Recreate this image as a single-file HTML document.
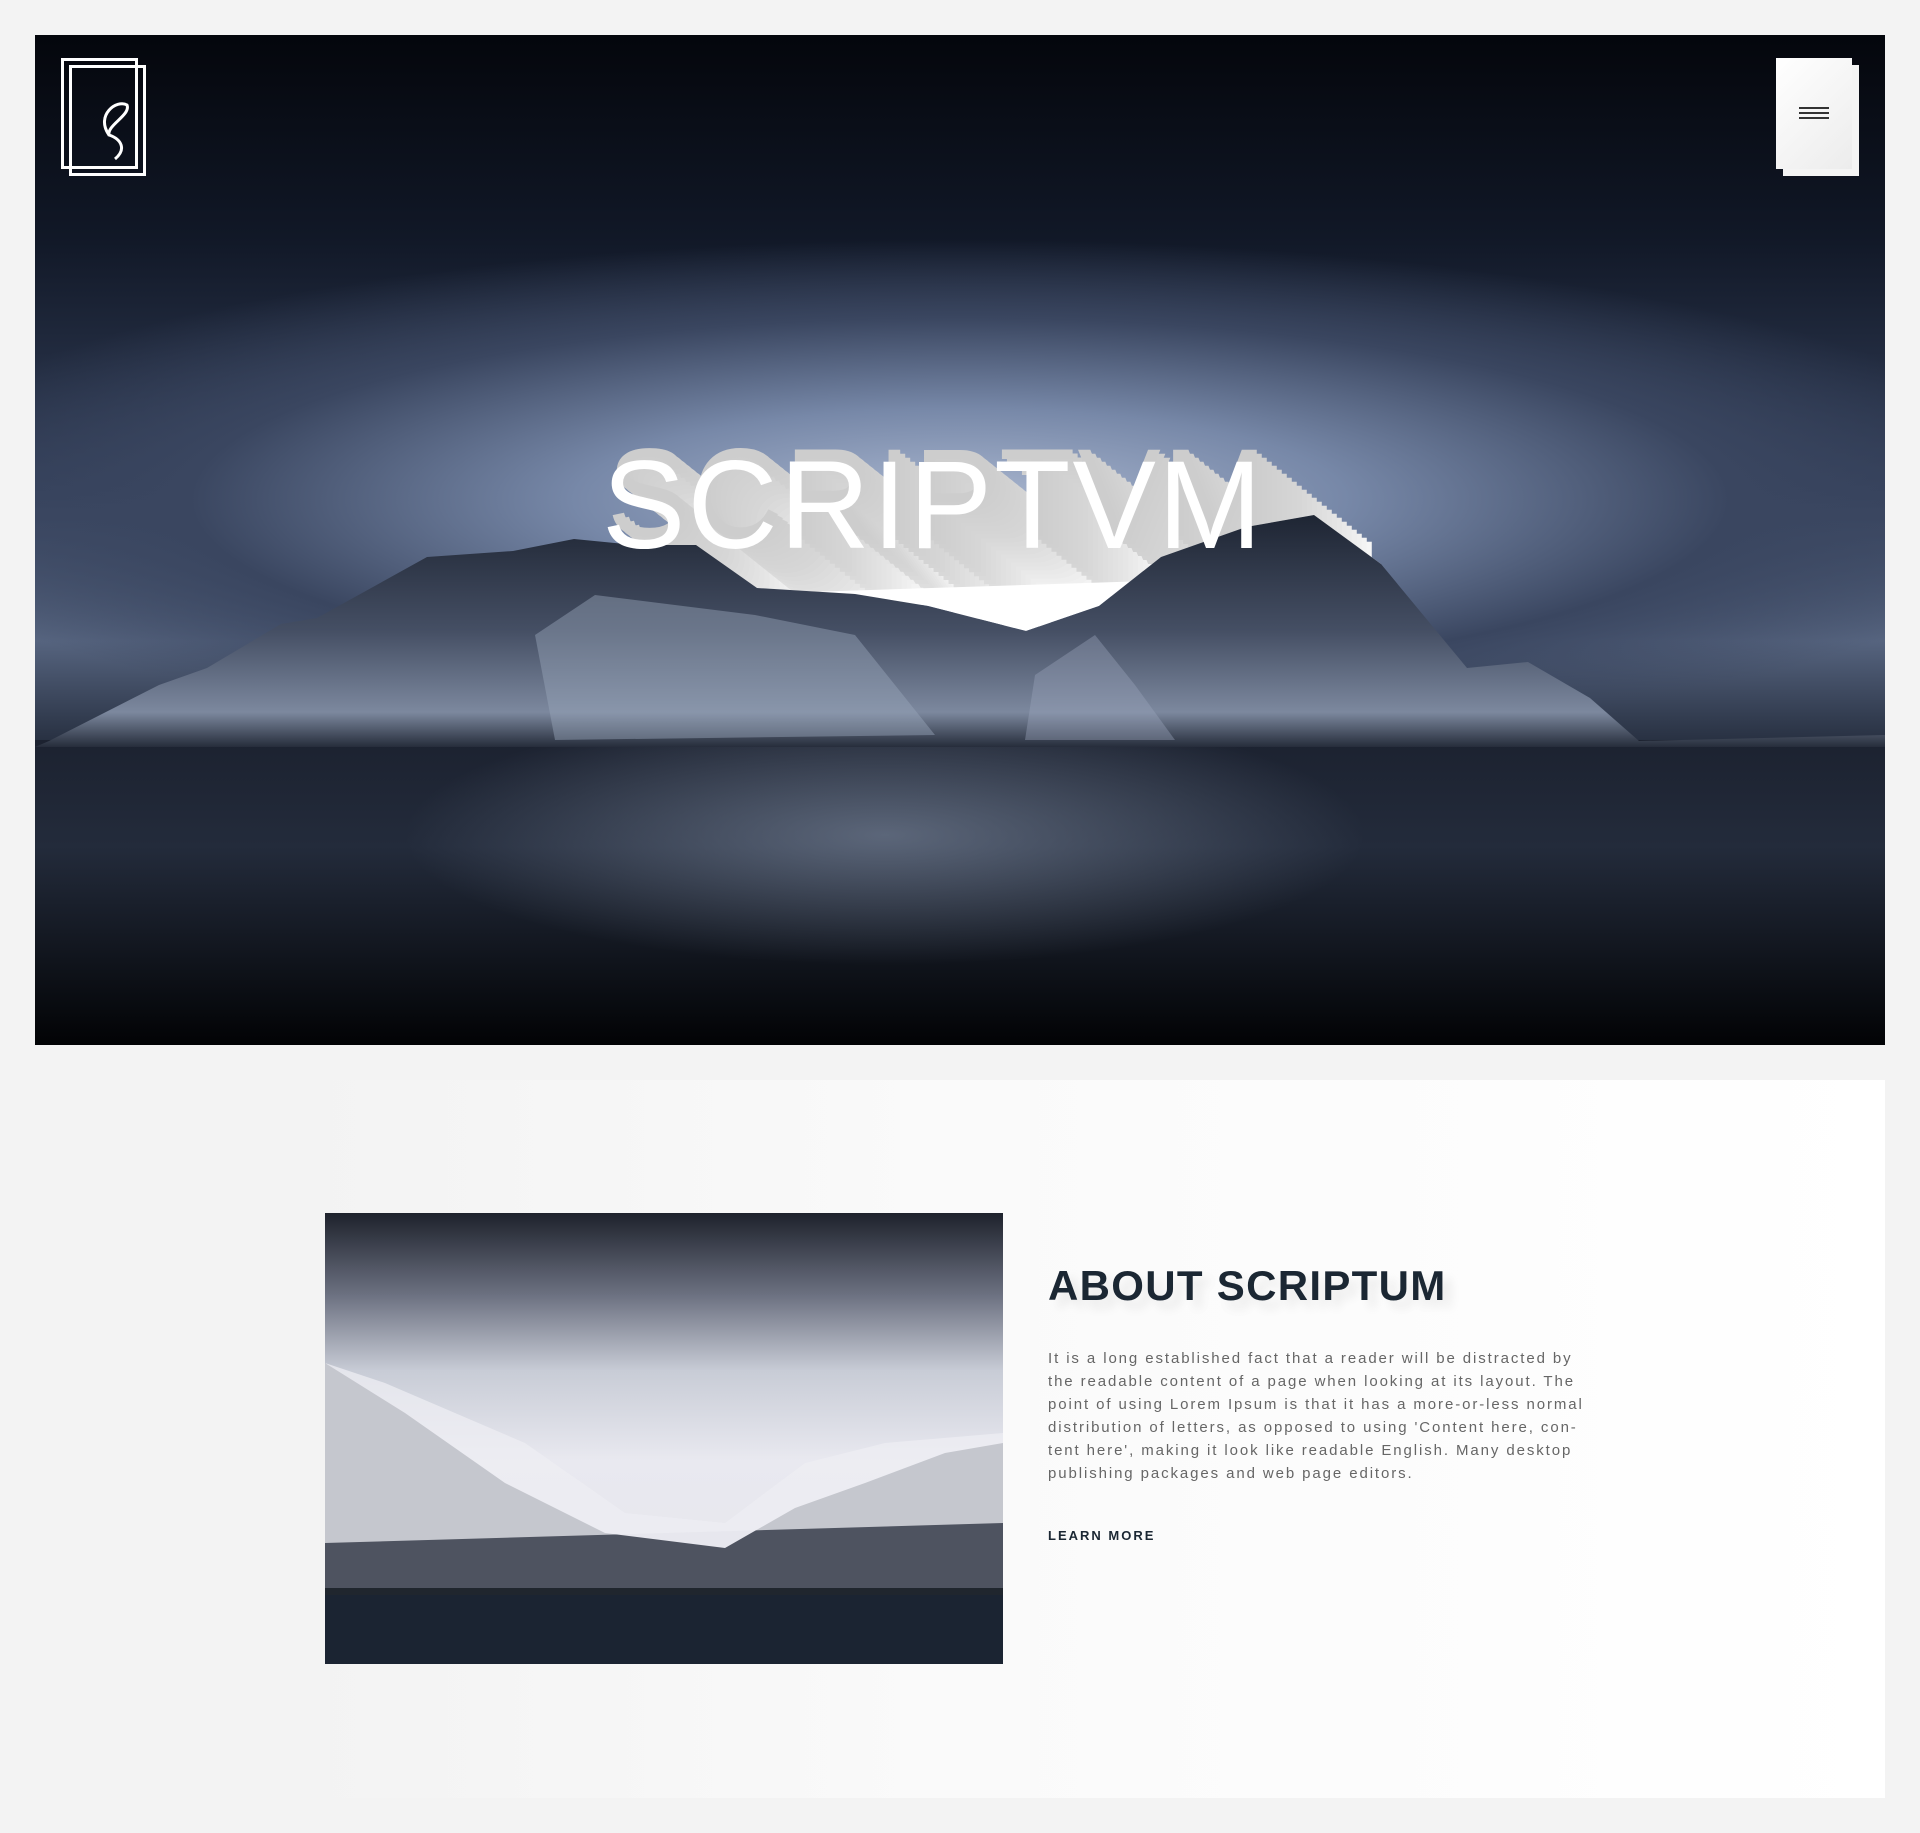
<!DOCTYPE html>
<html><head><meta charset="utf-8"><style>
*{margin:0;padding:0;box-sizing:border-box}
body{width:1920px;height:1833px;background:#f3f3f3;position:relative;overflow:hidden;font-family:"Liberation Sans",sans-serif}
.hero{position:absolute;left:35px;top:35px;width:1850px;height:1010px;overflow:hidden;
background:radial-gradient(ellipse 1100px 260px at 50% 46%,#a9b6cf 0%,#7788a8 35%,#3a4660 70%,rgba(10,14,24,0) 100%),linear-gradient(#04060c 0%,#111827 20%,#34405a 45%,#56647f 60%,#101622 75%,#030508 100%)}
.logo{position:absolute;border:3px solid #fff;width:77px;height:111px}
.menu{position:absolute;background:#fff;width:76px;height:111px}
.about{position:absolute;left:310px;top:1080px;width:1575px;height:718px;background:linear-gradient(90deg,#f3f3f3,#fafafa 40%,#fff)}
.img{position:absolute;left:325px;top:1213px;width:678px;height:451px;overflow:hidden;background:linear-gradient(#1e222c 0%,#6b7080 18%,#c8ccd6 35%,#e9e9f0 55%,#e4e4ea 100%)}
h2{position:absolute;left:1048px;top:1262px;font-size:42px;font-weight:bold;letter-spacing:1.3px;color:#1b2733;text-shadow:8px 8px 10px rgba(0,0,0,.08)}
p{position:absolute;left:1048px;top:1347px;width:552px;font-size:15px;line-height:23px;letter-spacing:1.9px;color:#666}
.lm{position:absolute;left:1048px;top:1528px;font-size:13px;font-weight:bold;letter-spacing:2px;color:#1b2733}
</style></head><body>
<div class="hero">
<svg width="1850" height="1010" style="position:absolute;left:0;top:0">
<defs><linearGradient id="m" x1="0" y1="0" x2="0" y2="1"><stop offset="0" stop-color="#1e2533"/><stop offset=".5" stop-color="#454f64"/><stop offset=".85" stop-color="#7c889e"/><stop offset="1" stop-color="#262d3b"/></linearGradient>
<linearGradient id="w" x1="0" y1="0" x2="0" y2="1"><stop offset="0" stop-color="#1c2230"/><stop offset=".35" stop-color="#232b3b"/><stop offset="1" stop-color="#020305"/></linearGradient>
<radialGradient id="r"><stop offset="0" stop-color="#8a97ad" stop-opacity=".55"/><stop offset="1" stop-color="#8a97ad" stop-opacity="0"/></radialGradient></defs>
<rect x="0" y="705" width="1850" height="305" fill="url(#w)"/>
<ellipse cx="850" cy="800" rx="480" ry="130" fill="url(#r)"/>
<g font-family="Liberation Sans" font-size="125">
<text x="687" y="593" textLength="660" fill="#f6f6f6">SCRIPTVM</text>
<text x="682" y="589" textLength="660" fill="#f3f3f3">SCRIPTVM</text>
<text x="677" y="585" textLength="660" fill="#f0f0f0">SCRIPTVM</text>
<text x="672" y="581" textLength="660" fill="#eee">SCRIPTVM</text>
<text x="667" y="577" textLength="660" fill="#ebebeb">SCRIPTVM</text>
<text x="662" y="573" textLength="660" fill="#e9e9e9">SCRIPTVM</text>
<text x="657" y="569" textLength="660" fill="#e6e6e6">SCRIPTVM</text>
<text x="652" y="565" textLength="660" fill="#e4e4e4">SCRIPTVM</text>
<text x="647" y="561" textLength="660" fill="#e2e2e2">SCRIPTVM</text>
<text x="642" y="557" textLength="660" fill="#e0e0e0">SCRIPTVM</text>
<text x="637" y="553" textLength="660" fill="#dedede">SCRIPTVM</text>
<text x="632" y="549" textLength="660" fill="#dcdcdc">SCRIPTVM</text>
<text x="627" y="545" textLength="660" fill="#dadada">SCRIPTVM</text>
<text x="622" y="541" textLength="660" fill="#d8d8d8">SCRIPTVM</text>
<text x="617" y="537" textLength="660" fill="#d6d6d6">SCRIPTVM</text>
<text x="612" y="533" textLength="660" fill="#d5d5d5">SCRIPTVM</text>
<text x="607" y="529" textLength="660" fill="#d4d4d4">SCRIPTVM</text>
<text x="602" y="525" textLength="660" fill="#d3d3d3">SCRIPTVM</text>
<text x="597" y="521" textLength="660" fill="#d2d2d2">SCRIPTVM</text>
<text x="592" y="517" textLength="660" fill="#d1d1d1">SCRIPTVM</text>
<text x="587" y="513" textLength="660" fill="#d0d0d0">SCRIPTVM</text>
<text x="582" y="509" textLength="660" fill="#cfcfcf">SCRIPTVM</text>
<text x="577" y="505" textLength="660" fill="#cecece">SCRIPTVM</text>
<text x="572" y="501" textLength="660" fill="#cdcdcd">SCRIPTVM</text>
</g>
<polygon fill="#fff" points="680,560 1300,540 1346,529 1279,480 1211,492 1126,522 1064,571 991,596 893,571 820,559 722,553"/>
<polygon fill="url(#m)" points="14,706 124,650 172,633 246,589 282,583 392,522 478,516 539,504 600,510 661,510 722,553 820,559 893,571 991,596 1064,571 1126,522 1211,492 1279,480 1346,529 1432,633 1493,627 1555,663 1604,706 1850,700 1850,712 0,712"/>
<polygon fill="#9aa6bb" opacity=".45" points="500,600 560,560 640,570 720,580 820,600 900,700 520,705"/>
<polygon fill="#9aa6bb" opacity=".4" points="1000,640 1060,600 1100,650 1140,705 990,705"/>
<text x="567" y="513" font-family="Liberation Sans" font-size="125" fill="#fff" textLength="660">SCRIPTVM</text>
</svg>
<div class="logo" style="left:26px;top:23px"></div>
<div class="logo" style="left:34px;top:30px"></div>
<svg style="position:absolute;left:50px;top:50px" width="60" height="80"><path d="M24 50 C10 30 32 14 42 20 C46 30 22 40 24 50 C36 54 42 64 30 74" fill="none" stroke="#fff" stroke-width="3"/></svg>
<div class="menu" style="left:1748px;top:30px;background:#f4f4f4"></div>
<div class="menu" style="left:1741px;top:23px;background:linear-gradient(135deg,#fff,#ececec)"></div>
<div style="position:absolute;left:1764px;top:72px;width:30px;height:2px;background:#333;box-shadow:0 5px 0 #333,0 10px 0 #333"></div>
</div>
<div class="about"></div>
<div class="img"><svg width="678" height="451"><polygon fill="#4e5360" points="0,150 80,200 180,270 280,320 400,335 470,295 540,270 620,240 678,230 678,380 0,380"/><polygon fill="#eeeef3" opacity=".75" points="0,150 60,170 200,230 300,300 400,310 480,250 560,230 678,220 678,310 0,330"/><rect y="380" width="678" height="71" fill="#1b2432"/><rect y="375" width="678" height="7" fill="#20262e"/></svg></div>
<h2>ABOUT SCRIPTUM</h2>
<p>It is a long established fact that a reader will be distracted by the readable content of a page when looking at its layout. The point of using Lorem Ipsum is that it has a more-or-less normal distribution of letters, as opposed to using 'Content here, con-tent here', making it look like readable English. Many desktop publishing packages and web page editors.</p>
<div class="lm">LEARN MORE</div>
</body></html>
